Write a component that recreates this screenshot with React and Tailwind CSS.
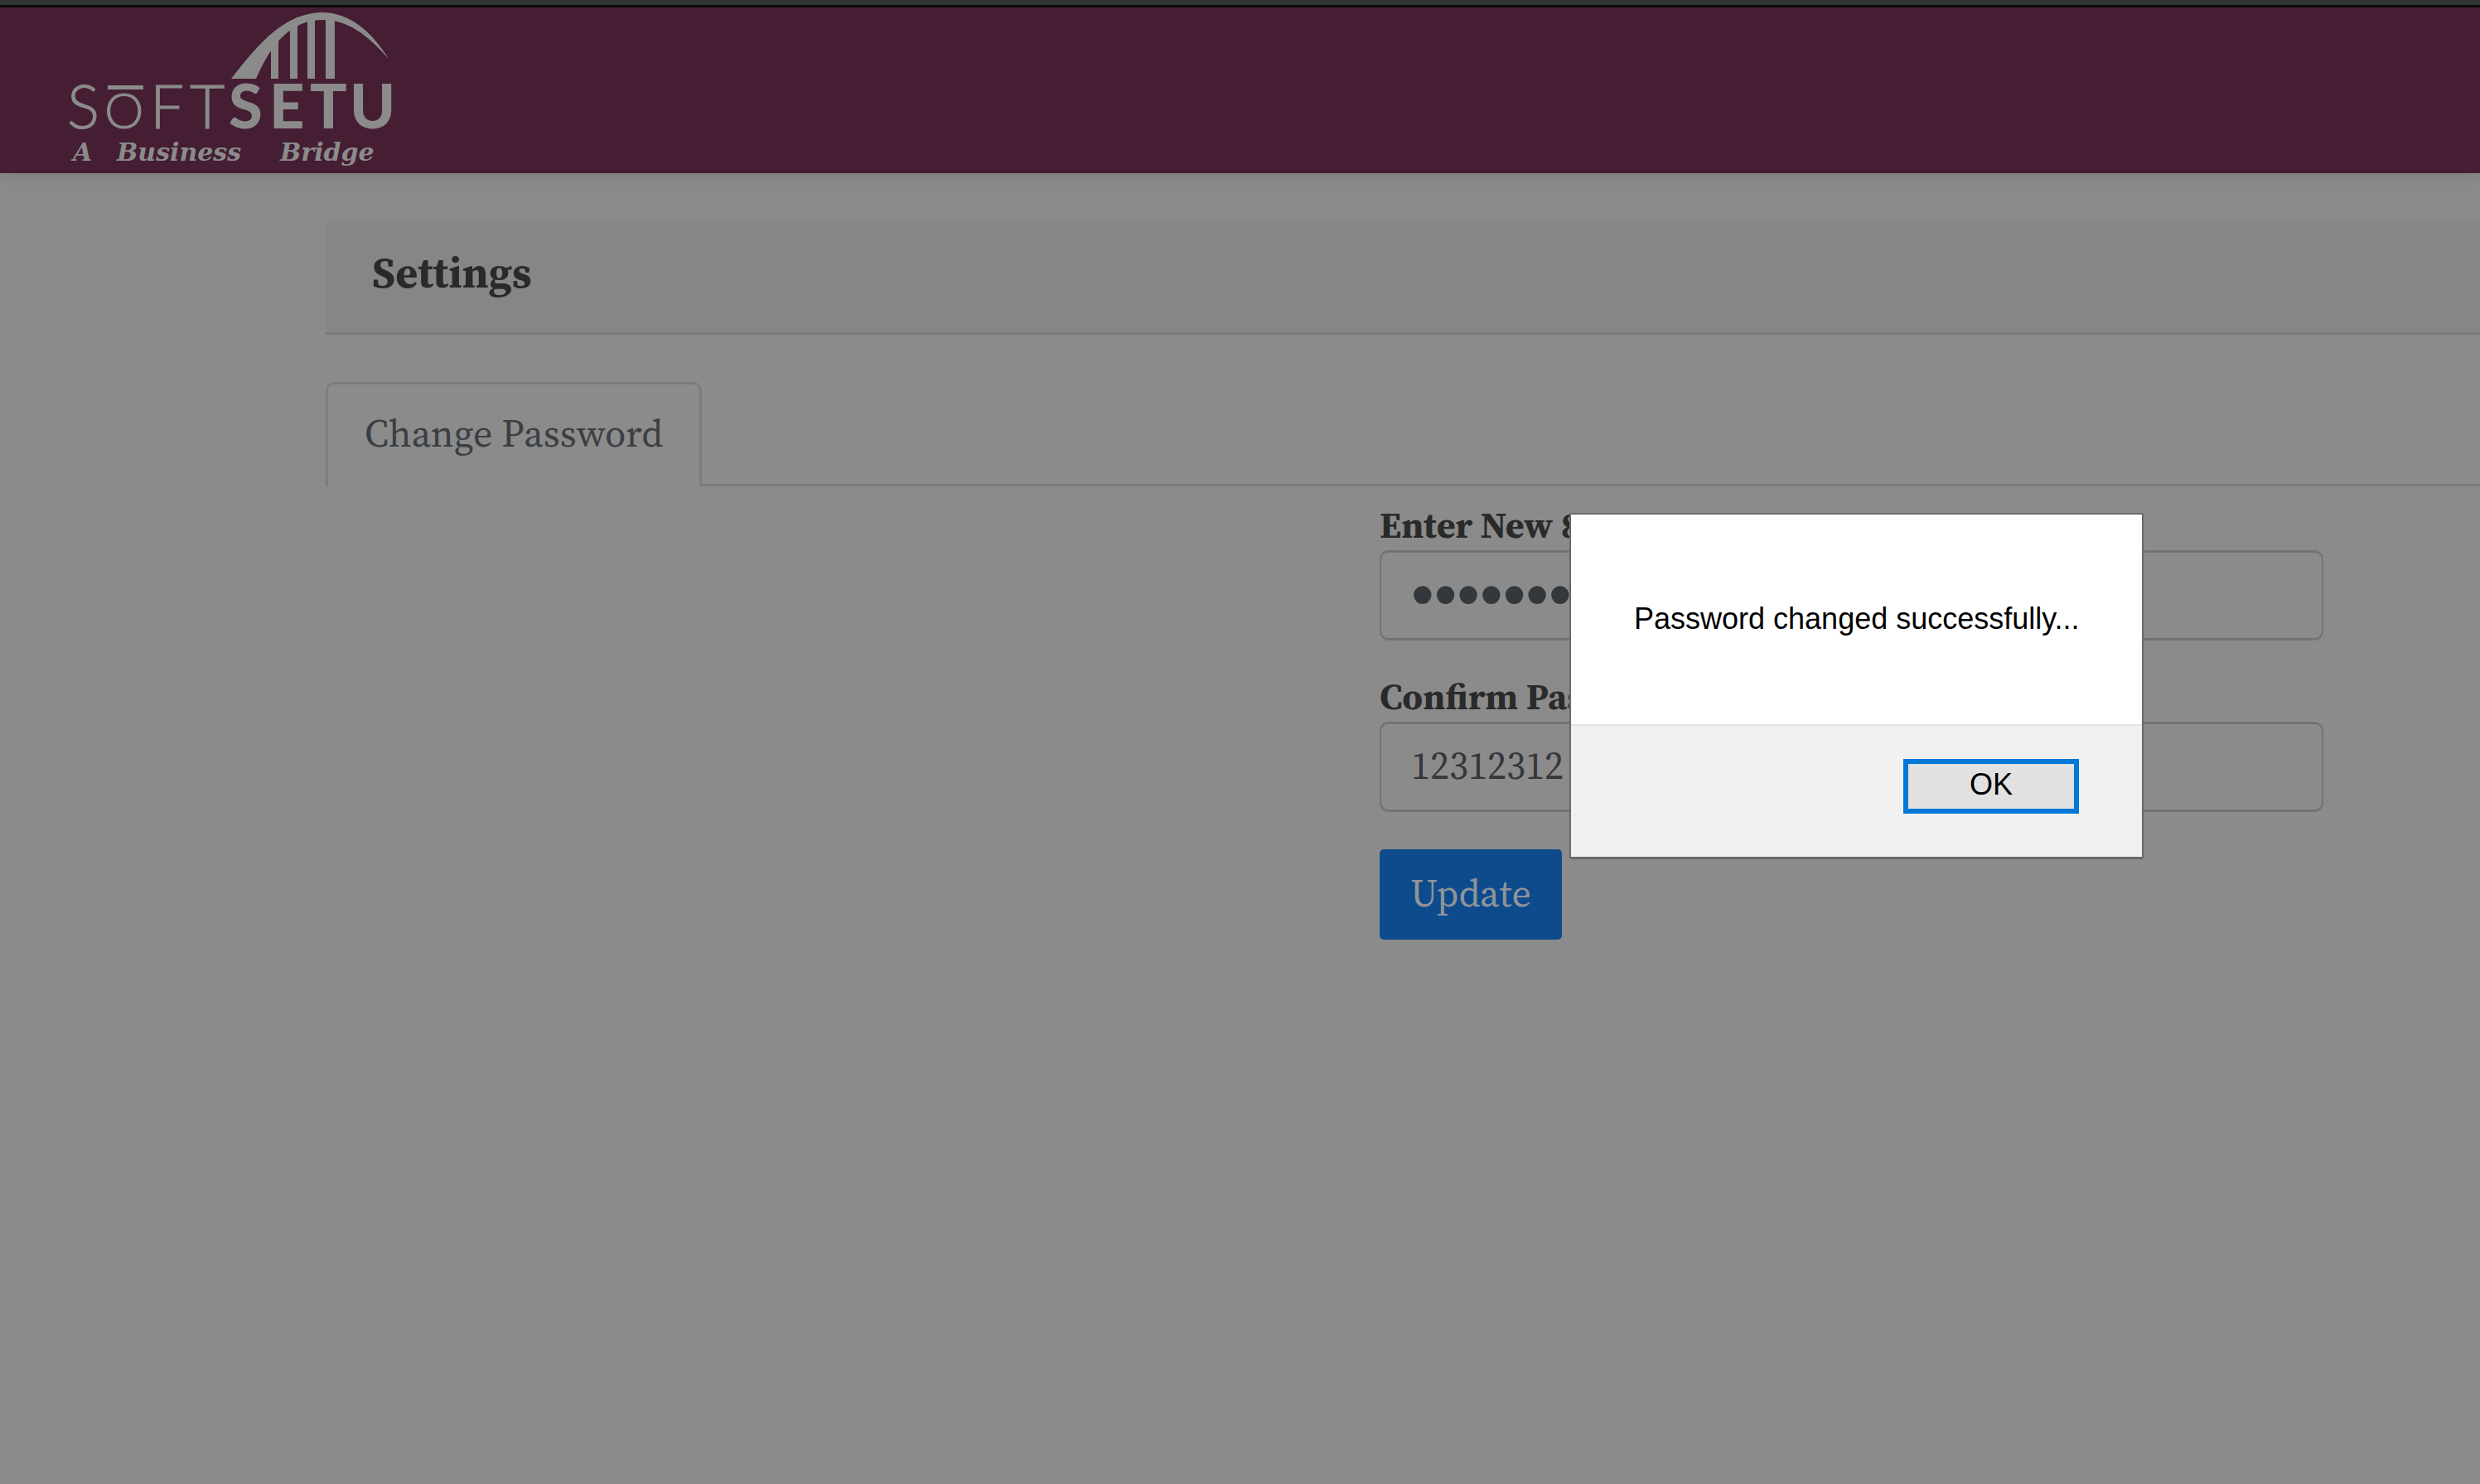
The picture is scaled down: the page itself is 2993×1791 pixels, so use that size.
function Logo() {
  return (
    <svg
      role="img"
      aria-label="SoftSetu, a business bridge"
      viewBox="80 9 400 200"
      className="h-[200px] w-[400px] shrink-0 fill-[#8b8b8b]"
    >
      <path d="M279 95 C314 50 344 16 388 15 C423 15 449 39 469 71 C444 42 419 24 390 24 C350 24 327 54 309 95 Z" />
      <path d="M327 52 L336 42 V95 H327 Z M350 34 L359 27 V95 H350 Z M371 25 L380 21 V95 H371 Z M393 18 H404 V95 H393 Z" />
      <g
        fontFamily="Lato"
        fontWeight="300"
        fontSize="73"
        stroke="#8b8b8b"
        strokeWidth="1"
      >
        <text y="155">
          <tspan x="81">S</tspan>
          <tspan x="126" fontSize="60">O</tspan>
          <tspan x="181">F</tspan>
          <tspan x="229">T</tspan>
        </text>
      </g>
      <rect x="130" y="103" width="43" height="5" />
      <g fontFamily="Lato" fontWeight="900" fontSize="74">
        <text y="155">
          <tspan x="276">S</tspan>
          <tspan x="325">E</tspan>
          <tspan x="374">T</tspan>
          <tspan x="422">U</tspan>
        </text>
      </g>
      <g
        fontFamily="'DejaVu Serif', serif"
        fontStyle="italic"
        fontWeight="700"
        fontSize="30"
      >
        <text y="194">
          <tspan x="88">A</tspan>
          <tspan x="141">Business</tspan>
          <tspan x="338">Bridge</tspan>
        </text>
      </g>
    </svg>
  );
}

const fieldClass =
  "block h-[109px] w-full rounded-[11px] border-x-2 border-y-[3px] border-[#707477] bg-transparent px-9 text-[#33383c] outline-none";
const labelClass =
  "block pb-2 text-[44px] leading-[44px] font-bold text-[#292a2a]";

export default function App() {
  return (
    <div className="relative min-h-screen overflow-hidden bg-[#8b8b8b] font-['Source_Serif_4','Liberation_Serif',serif]">
      <div className="h-[9px] border-b-[3px] border-[#0c0c0c] bg-[#333436]" />
      <header className="flex bg-[#451e33] pl-20 shadow-[0_6px_16px_rgba(0,0,0,0.08)]">
        <Logo />
      </header>

      <main className="pt-[57px] pl-[393px]">
        <div className="rounded-tl-[6px] border-b-[3px] border-[#787878] bg-[#868686] px-14 pt-7 pb-[37px]">
          <h1 className="text-[52px] leading-[70px] font-bold text-[#292a2a]">
            Settings
          </h1>
        </div>

        <nav className="mt-[57px] flex" role="tablist">
          <button
            type="button"
            role="tab"
            aria-selected="true"
            className="h-[126px] rounded-t-[10px] border-x-[3px] border-t-[3px] border-[#7b7d7f] px-11 pb-1.5 text-[46px] leading-[60px] text-[#3b3f43]"
          >
            Change Password
          </button>
          <div className="grow border-b-[3px] border-[#7b7d7f]" />
        </nav>

        <form
          className="mt-[25px] mr-[189px] ml-auto w-[1139px]"
          onSubmit={(e) => e.preventDefault()}
        >
          <label htmlFor="new-password" className={labelClass}>
            Enter New 8
          </label>
          <input
            id="new-password"
            type="password"
            defaultValue="12312312"
            className={`${fieldClass} font-['Liberation_Sans'] text-[79px]`}
          />
          <label htmlFor="confirm-password" className={`mt-[46px] ${labelClass}`}>
            Confirm Password
          </label>
          <input
            id="confirm-password"
            type="text"
            defaultValue="12312312"
            className={`${fieldClass} pb-1 text-[46px]`}
          />
          <button
            type="submit"
            className="mt-[45px] h-[109px] rounded-[5px] bg-[#0d4b8d] px-[37px] pb-1 text-[46px] leading-[60px] text-[#8f9499]"
          >
            Update
          </button>
        </form>
      </main>

      <div
        role="alertdialog"
        aria-labelledby="alert-message"
        className="absolute top-[619px] left-[1894px] w-[693px] rounded-[2px] border-x-2 border-t-2 border-b-[3px] border-[#696969] bg-white font-['Liberation_Sans',Arial,sans-serif] text-[36px] leading-[44px] text-black"
      >
        <p id="alert-message" className="px-[76px] pt-[104px] pb-[105px] whitespace-nowrap">
          Password changed successfully...
        </p>
        <div className="flex justify-end border-t-2 border-[#e3e3e3] bg-[#f1f1f1] pt-10 pr-[76px] pb-[52px]">
          <button
            type="button"
            className="h-[66px] w-[212px] border-[6px] border-[#0078d7] bg-[#e1e1e1] pb-1"
          >
            OK
          </button>
        </div>
      </div>
    </div>
  );
}
